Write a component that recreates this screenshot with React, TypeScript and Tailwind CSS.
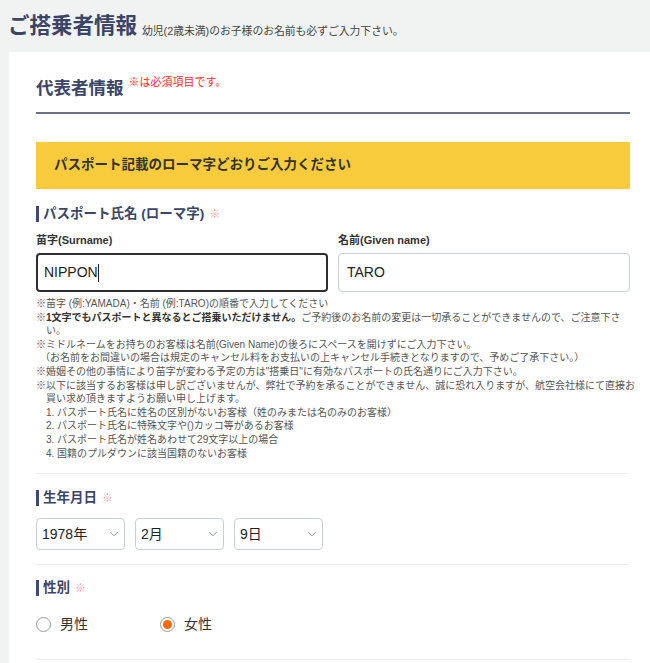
import { ChevronDown } from 'lucide-react';

const font = { fontFamily: '"Liberation Sans", "Noto Sans CJK JP", sans-serif' };

function SectionTitle({ children }: { children: React.ReactNode }) {
  return (
    <div className="flex items-center h-[20px]">
      <span className="w-[3px] h-[16px] bg-[#3d4a72] mr-[4px]" />
      <span className="text-[13.5px] font-bold text-[#3b4566]">{children}</span>
      <span className="ml-[5px] text-[11px] text-[#f4a0a8]">※</span>
    </div>
  );
}

function Select({ value }: { value: string }) {
  return (
    <div className="w-[89px] h-[32px] border border-[#c9cfd2] rounded-[4px] flex items-center justify-between pl-[5px] pr-[3px] text-[14px] text-[#222]">
      <span>{value}</span>
      <ChevronDown className="w-[14px] h-[14px] text-[#777]" strokeWidth={1.4} />
    </div>
  );
}

function Radio({ label, checked }: { label: string; checked?: boolean }) {
  return (
    <label className="flex items-center gap-[9px] text-[14px] text-[#333]">
      <span className="w-[15px] h-[15px] rounded-full border border-[#9a9a9a] flex items-center justify-center">
        {checked && <span className="w-[9px] h-[9px] rounded-full bg-[#ff6a00]" />}
      </span>
      {label}
    </label>
  );
}

export default function App() {
  return (
    <div className="min-h-screen bg-[#f1f3f3] text-[#333]" style={font}>
      <div className="flex items-end px-[8px] pt-[12px] h-[52px] pb-[13px]">
        <h1 className="text-[21.5px] leading-[25px] font-bold text-[#3b4566]">ご搭乗者情報</h1>
        <span className="ml-[5px] text-[10.8px] leading-[16px] text-[#444]">幼児(2歳未満)のお子様のお名前も必ずご入力下さい。</span>
      </div>

      <div className="ml-[9px] bg-white pl-[27px] pr-[20px] pt-[24px]">
        <div className="flex items-start">
          <h2 className="text-[17.5px] leading-[22px] font-bold text-[#3b4566] mt-[1px]">代表者情報</h2>
          <span className="ml-[5px] text-[11px] leading-[12px] text-[#ff2a2a]">※は必須項目です。</span>
        </div>
        <div className="h-[2px] bg-[#6c7088] mt-[13px]" />

        <div className="mt-[28px] h-[47px] bg-[#f8cb3c] flex items-center pl-[18px] text-[13.5px] font-bold text-[#333]">
          パスポート記載のローマ字どおりご入力ください
        </div>

        <div className="mt-[15px]">
          <SectionTitle>パスポート氏名 (ローマ字)</SectionTitle>
        </div>

        <div className="mt-[10px] grid grid-cols-2 gap-[10px]">
          <div>
            <div className="text-[11px] leading-[12px] font-bold text-[#333]">苗字(Surname)</div>
            <div className="mt-[7px] h-[39px] border-2 border-[#2e2e2e] rounded-[4px] flex items-center pl-[6px] text-[14px] text-[#222]">
              NIPPON<span className="w-px h-[18px] bg-[#222]" />
            </div>
          </div>
          <div>
            <div className="text-[11px] leading-[12px] font-bold text-[#333]">名前(Given name)</div>
            <div className="mt-[7px] h-[39px] border border-[#c9cfd2] rounded-[4px] flex items-center pl-[8px] text-[14px] text-[#222]">
              TARO
            </div>
          </div>
        </div>

        <div className="mt-[5px] text-[10px] leading-[13.6px] text-[#555] whitespace-nowrap">
          <p>※苗字 (例:YAMADA)・名前 (例:TARO)の順番で入力してください</p>
          <p>
            ※<b className="text-[#333]">1文字でもパスポートと異なるとご搭乗いただけません。</b>ご予約後のお名前の変更は一切承ることができませんので、ご注意下さ
          </p>
          <p className="pl-[10px]">い。</p>
          <p>※ミドルネームをお持ちのお客様は名前(Given Name)の後ろにスペースを開けずにご入力下さい。</p>
          <p className="pl-[4px]">（お名前をお間違いの場合は規定のキャンセル料をお支払いの上キャンセル手続きとなりますので、予めご了承下さい。）</p>
          <p>※婚姻その他の事情により苗字が変わる予定の方は"搭乗日"に有効なパスポートの氏名通りにご入力下さい。</p>
          <p>※以下に該当するお客様は申し訳ございませんが、弊社で予約を承ることができません、誠に恐れ入りますが、航空会社様にて直接お</p>
          <p className="pl-[10px]">買い求め頂きますようお願い申し上げます。</p>
          <p className="pl-[10px]">1. パスポート氏名に姓名の区別がないお客様（姓のみまたは名のみのお客様）</p>
          <p className="pl-[10px]">2. パスポート氏名に特殊文字や()カッコ等があるお客様</p>
          <p className="pl-[10px]">3. パスポート氏名が姓名あわせて29文字以上の場合</p>
          <p className="pl-[10px]">4. 国籍のプルダウンに該当国籍のないお客様</p>
        </div>

        <div className="mt-[13px] h-px bg-[#eceeef]" />

        <div className="mt-[14px]">
          <SectionTitle>生年月日</SectionTitle>
        </div>
        <div className="mt-[10px] flex gap-[10px]">
          <Select value="1978年" />
          <Select value="2月" />
          <Select value="9日" />
        </div>

        <div className="mt-[14px] h-px bg-[#eceeef]" />

        <div className="mt-[13px]">
          <SectionTitle>性別</SectionTitle>
        </div>
        <div className="mt-[16px] flex items-center gap-[72px] h-[20px]">
          <Radio label="男性" />
          <Radio label="女性" checked />
        </div>

        <div className="mt-[25px] h-px bg-[#eceeef]" />
        <div className="h-[20px]" />
      </div>
    </div>
  );
}
